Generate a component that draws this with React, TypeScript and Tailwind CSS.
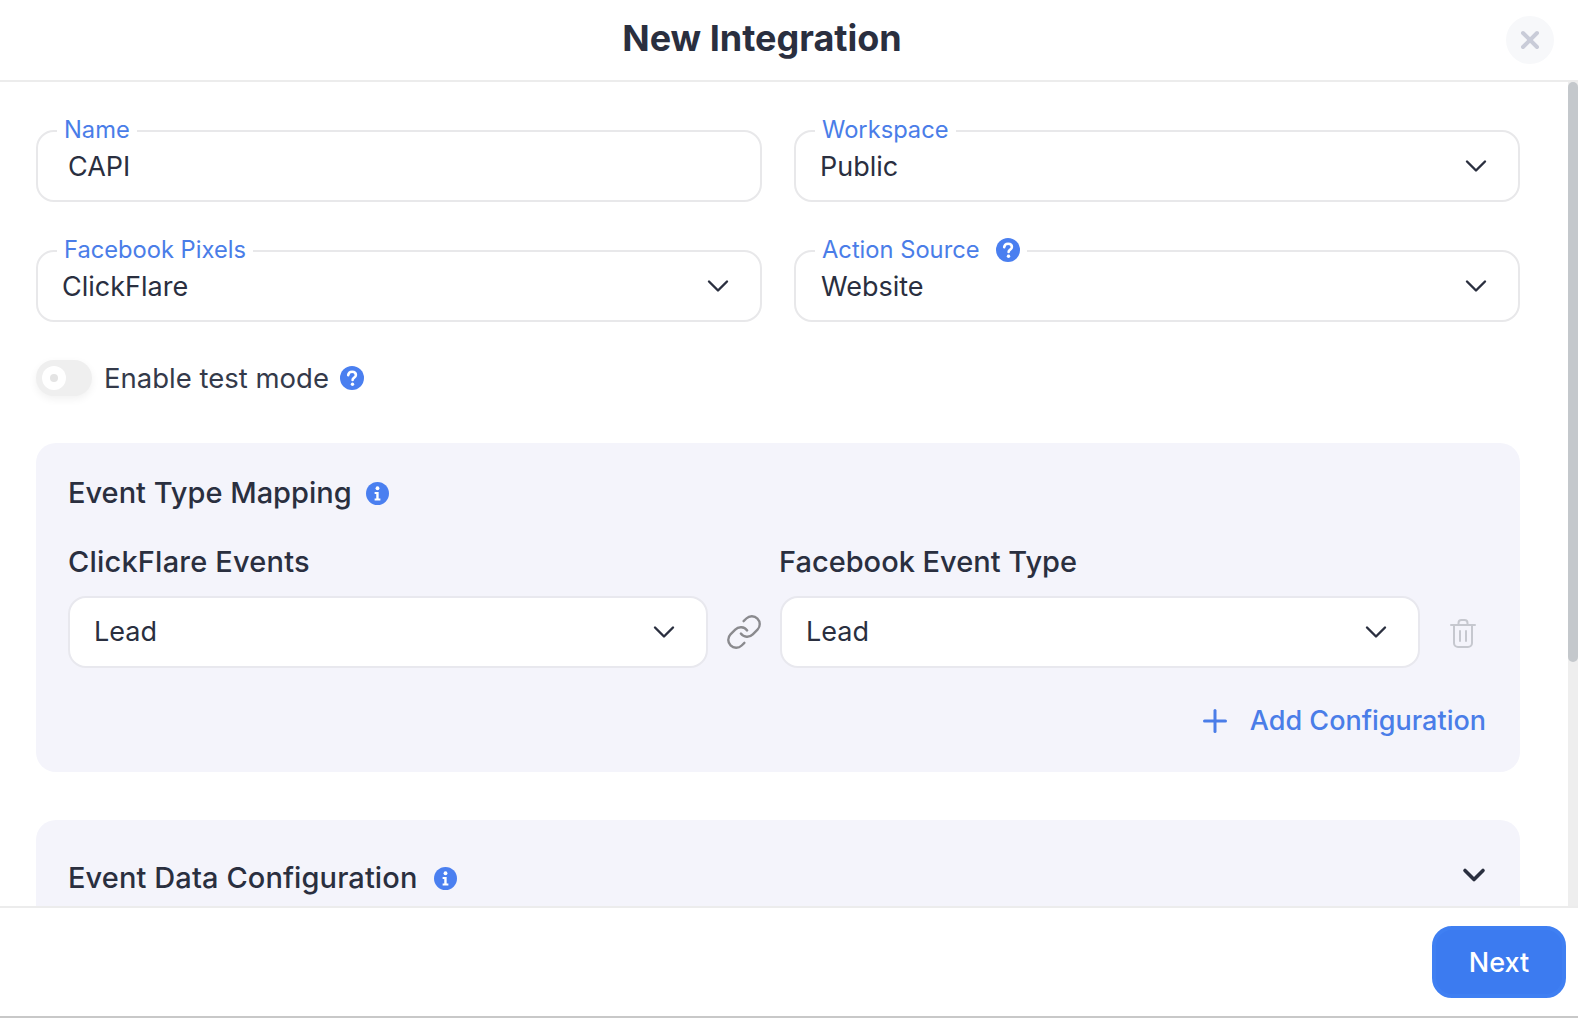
import { ChevronDown, X, Plus, Link } from "lucide-react";

function Help({ className = "" }: { className?: string }) {
  return (
    <svg viewBox="0 0 24 24" className={className} aria-hidden>
      <circle cx="12" cy="12" r="12" fill="#4a7ff0" />
      <path d="M8.2 9.2c.2-2.2 1.8-3.5 3.9-3.5 2.2 0 3.8 1.3 3.8 3.2 0 1.5-.9 2.3-2 3-.9.6-1.3 1-1.3 2" fill="none" stroke="#fff" strokeWidth="2.6" strokeLinecap="round" />
      <circle cx="12.5" cy="18.3" r="1.7" fill="#fff" />
    </svg>
  );
}

function Info({ className = "" }: { className?: string }) {
  return (
    <svg viewBox="0 0 24 24" className={className} aria-hidden>
      <circle cx="12" cy="12" r="12" fill="#4a7ff0" />
      <circle cx="12" cy="6.5" r="2" fill="#fff" />
      <path d="M9 10.4h4.2v6.8H15v2H9v-2h1.7v-4.8H9z" fill="#fff" />
    </svg>
  );
}

function Field({ label, value, select, help, valueClass }: { label: string; value: string; select?: boolean; help?: boolean; valueClass: string }) {
  return (
    <div className="relative flex h-[72px] items-center rounded-[18px] border-2 border-[#e8e8ea] bg-white">
      <div className="absolute -top-[17px] left-[19px] flex items-center gap-[16px] bg-white px-[7px] text-[23.7px] leading-[30px] text-[#4a7de8]">
        <span>{label}</span>
        {help && <Help className="h-[24px] w-[24px]" />}
      </div>
      <span className={`pt-[2px] text-[27px] text-[#2a2f3f] ${valueClass}`}>{value}</span>
      {select && <ChevronDown className="ml-auto mr-[24px] h-[36px] w-[36px] text-[#2a2f3f]" strokeWidth={1.6} />}
    </div>
  );
}

function MapSelect() {
  return (
    <div className="flex h-[72px] flex-1 items-center rounded-[18px] border-2 border-[#e8e8ee] bg-white pl-[24px] pr-[24px]">
      <span className="text-[27px] text-[#2a2f3f]">Lead</span>
      <ChevronDown className="ml-auto h-[36px] w-[36px] text-[#2a2f3f]" strokeWidth={1.6} />
    </div>
  );
}

export default function App() {
  return (
    <div className="flex h-[1018px] w-[1578px] flex-col overflow-hidden bg-white font-['Inter',sans-serif]">
      <header className="relative flex h-[82px] shrink-0 items-center justify-center border-b-2 border-[#ececec] pb-[5px] pr-[54px]">
        <h1 className="text-[36px] font-bold text-[#2a2f3f]">New Integration</h1>
        <button className="absolute right-[24px] top-[16px] flex h-[48px] w-[48px] items-center justify-center rounded-full bg-[#f7f8fa]">
          <X className="h-[28px] w-[28px] text-[#c9ccd8]" strokeWidth={3.4} />
        </button>
      </header>

      <div className="flex min-h-0 flex-1">
        <main className="flex-1 overflow-hidden pl-[36px] pr-[48px] pt-[48px]">
          <div className="grid grid-cols-2 gap-x-[32px] gap-y-[48px]">
            <Field label="Name" value="CAPI" valueClass="pl-[30px]" />
            <Field label="Workspace" value="Public" select valueClass="pl-[24px]" />
            <Field label="Facebook Pixels" value="ClickFlare" select valueClass="pl-[24px]" />
            <Field label="Action Source" value="Website" select help valueClass="pl-[25px]" />
          </div>

          <div className="mt-[38px] flex h-[36px] items-center">
            <div className="relative h-[36px] w-[56px] rounded-full bg-[#efefef] shadow-[0_3px_8px_rgba(0,0,0,0.06)]">
              <div className="absolute left-[6px] top-[6px] flex h-[24px] w-[24px] items-center justify-center rounded-full bg-white">
                <div className="h-[8px] w-[8px] rounded-full bg-[#e4e4e4]" />
              </div>
            </div>
            <span className="ml-[12px] pt-[2px] text-[27.5px] text-[#343a4a]">Enable test mode</span>
            <Help className="ml-[11px] h-[24px] w-[24px]" />
          </div>

          <section className="mt-[47px] h-[329px] rounded-[20px] bg-[#f4f4fb] px-[32px] pt-[30px]">
            <div className="flex h-[40px] items-center">
              <h2 className="text-[29px] font-medium text-[#2a2f3f]">Event Type Mapping</h2>
              <Info className="ml-[14px] h-[23px] w-[23px]" />
            </div>
            <div className="mt-[29px] flex text-[29px] font-medium leading-[40px] text-[#2a2f3f]">
              <span className="w-[711px] tracking-[0.2px]">ClickFlare Events</span>
              <span>Facebook Event Type</span>
            </div>
            <div className="mt-[14px] flex items-center">
              <MapSelect />
              <div className="flex w-[72px] justify-center">
                <Link className="h-[38px] w-[38px] text-[#8a8a8e]" strokeWidth={1.5} />
              </div>
              <MapSelect />
              <div className="flex w-[68px] justify-center pl-[17px] pt-[3px]">
                <svg viewBox="0 0 26 30" className="h-[30px] w-[26px] text-[#c6c8cf]" fill="none" stroke="currentColor" strokeWidth="2" strokeLinecap="round">
                  <path d="M1 6h24" />
                  <path d="M8.5 5V4a3 3 0 0 1 3-3h3a3 3 0 0 1 3 3v1" />
                  <path d="M4 6.5V24a4 4 0 0 0 4 4h10a4 4 0 0 0 4-4V6.5" />
                  <path d="M10 12v10M16 12v10" />
                </svg>
              </div>
            </div>
            <div className="mr-[2px] mt-[33px] flex items-center justify-end text-[#4a7de8]">
              <Plus className="h-[36px] w-[36px]" strokeWidth={2} />
              <span className="ml-[17px] text-[27px] font-medium">Add Configuration</span>
            </div>
          </section>

          <section className="mt-[48px] h-[200px] rounded-[20px] bg-[#f4f4fb] px-[32px] pt-[38px]">
            <div className="flex h-[40px] items-center">
              <h2 className="text-[29px] font-medium tracking-[0.1px] text-[#2a2f3f]">Event Data Configuration</h2>
              <Info className="ml-[17px] h-[23px] w-[23px]" />
              <ChevronDown className="ml-auto mr-[-4px] h-[36px] w-[36px] -translate-y-[3px] text-[#2a2f3f]" strokeWidth={2.4} />
            </div>
          </section>
        </main>
        <div className="w-[10px] shrink-0 bg-[#eeeeee]">
          <div className="h-[580px] rounded-[5px] bg-[#c4c8cc]" />
        </div>
      </div>

      <footer className="flex h-[112px] shrink-0 items-start justify-end border-y-2 border-t-[#ececec] border-b-[#c8c8c8] pr-[12px] pt-[18px]">
        <button className="h-[72px] w-[134px] rounded-[20px] border-[4px] border-[#3f7ff2] bg-[#3c7bf0] pt-[2px] text-[27px] font-medium text-white">Next</button>
      </footer>
    </div>
  );
}
